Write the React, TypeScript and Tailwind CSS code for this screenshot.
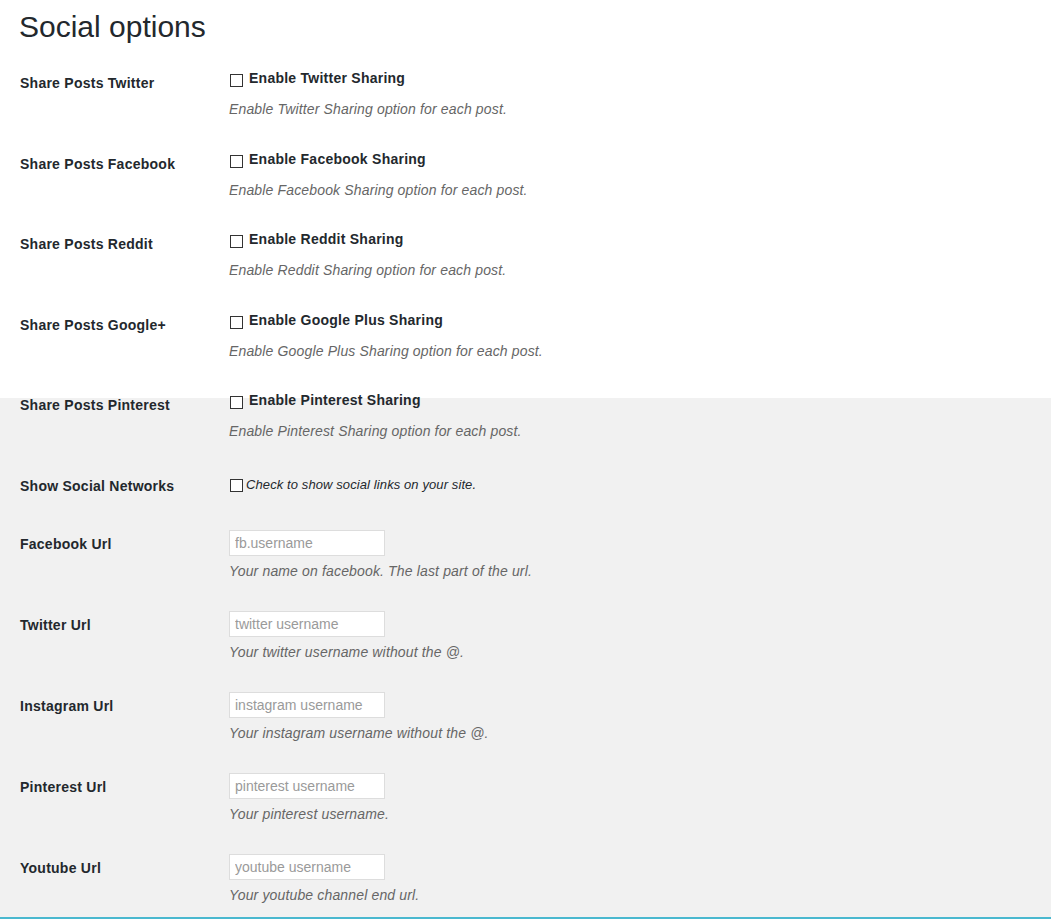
import React from 'react'

type ShareRow = { label: string; name: string }

const SHARE_ROWS: ShareRow[] = [
  { label: 'Share Posts Twitter', name: 'Twitter' },
  { label: 'Share Posts Facebook', name: 'Facebook' },
  { label: 'Share Posts Reddit', name: 'Reddit' },
  { label: 'Share Posts Google+', name: 'Google Plus' },
  { label: 'Share Posts Pinterest', name: 'Pinterest' },
]

const URL_ROWS: { label: string; placeholder: string; help: string }[] = [
  { label: 'Facebook Url', placeholder: 'fb.username', help: 'Your name on facebook. The last part of the url.' },
  { label: 'Twitter Url', placeholder: 'twitter username', help: 'Your twitter username without the @.' },
  { label: 'Instagram Url', placeholder: 'instagram username', help: 'Your instagram username without the @.' },
  { label: 'Pinterest Url', placeholder: 'pinterest username', help: 'Your pinterest username.' },
  { label: 'Youtube Url', placeholder: 'youtube username', help: 'Your youtube channel end url.' },
]

function Box() {
  return <span className="block w-[13px] h-[13px] shrink-0 border border-[#333] bg-white" />
}

function Label({ children }: { children: React.ReactNode }) {
  return (
    <div className="w-[229px] shrink-0 pl-[20px] pt-[20px] pb-[20px] text-[14px] leading-[18px] font-bold tracking-[0.25px] text-[#23282d]">
      {children}
    </div>
  )
}

export default function App() {
  return (
    <div
      className="h-[919px] overflow-hidden border-b-2 border-[#4ab8cf] bg-[linear-gradient(to_bottom,#ffffff_398px,#f1f1f1_398px)] text-[#23282d]"
      style={{ fontFamily: '"Liberation Sans", Arial, sans-serif' }}
    >
      <h1 className="pl-[19px] pt-[9px] text-[30px] leading-[36px] font-normal text-[#23282d]">Social options</h1>

      <div className="mt-[9px]">
        {/* Sharing checkboxes */}
        {SHARE_ROWS.map(row => (
          <div key={row.label} className="flex">
            <Label>{row.label}</Label>
            <div className="pt-[15px] pb-[15.5px]">
              <label className="flex items-start gap-[6px] ml-[1px] text-[14px] leading-[18px] font-bold tracking-[0.25px]">
                <span className="mt-[5px]"><Box /></span>
                Enable {row.name} Sharing
              </label>
              <p className="mt-[12px] text-[14px] leading-[20px] italic tracking-[0.15px] text-[#666]">
                Enable {row.name} Sharing option for each post.
              </p>
            </div>
          </div>
        ))}

        <div className="flex">
          <Label>Show Social Networks</Label>
          <div className="pt-[19px]">
            <label className="flex items-center gap-[3px] ml-[1px] text-[13px] leading-[18px] italic tracking-[0.1px] text-[#23282d]">
              <span className="mt-[2px]"><Box /></span>
              Check to show social links on your site.
            </label>
          </div>
        </div>

        {/* Url fields */}
        {URL_ROWS.map(row => (
          <div key={row.label} className="flex">
            <Label>{row.label}</Label>
            <div className="pt-[15px] pb-[15px]">
              <input
                type="text"
                placeholder={row.placeholder}
                className="block w-[156px] h-[26px] px-[5px] border border-[#ddd] bg-white text-[14px] text-[#333] placeholder:text-[#9a9a9a] outline-none"
              />
              <p className="mt-[5px] text-[14px] leading-[20px] italic tracking-[0.15px] text-[#666]">{row.help}</p>
            </div>
          </div>
        ))}
      </div>
    </div>
  )
}
